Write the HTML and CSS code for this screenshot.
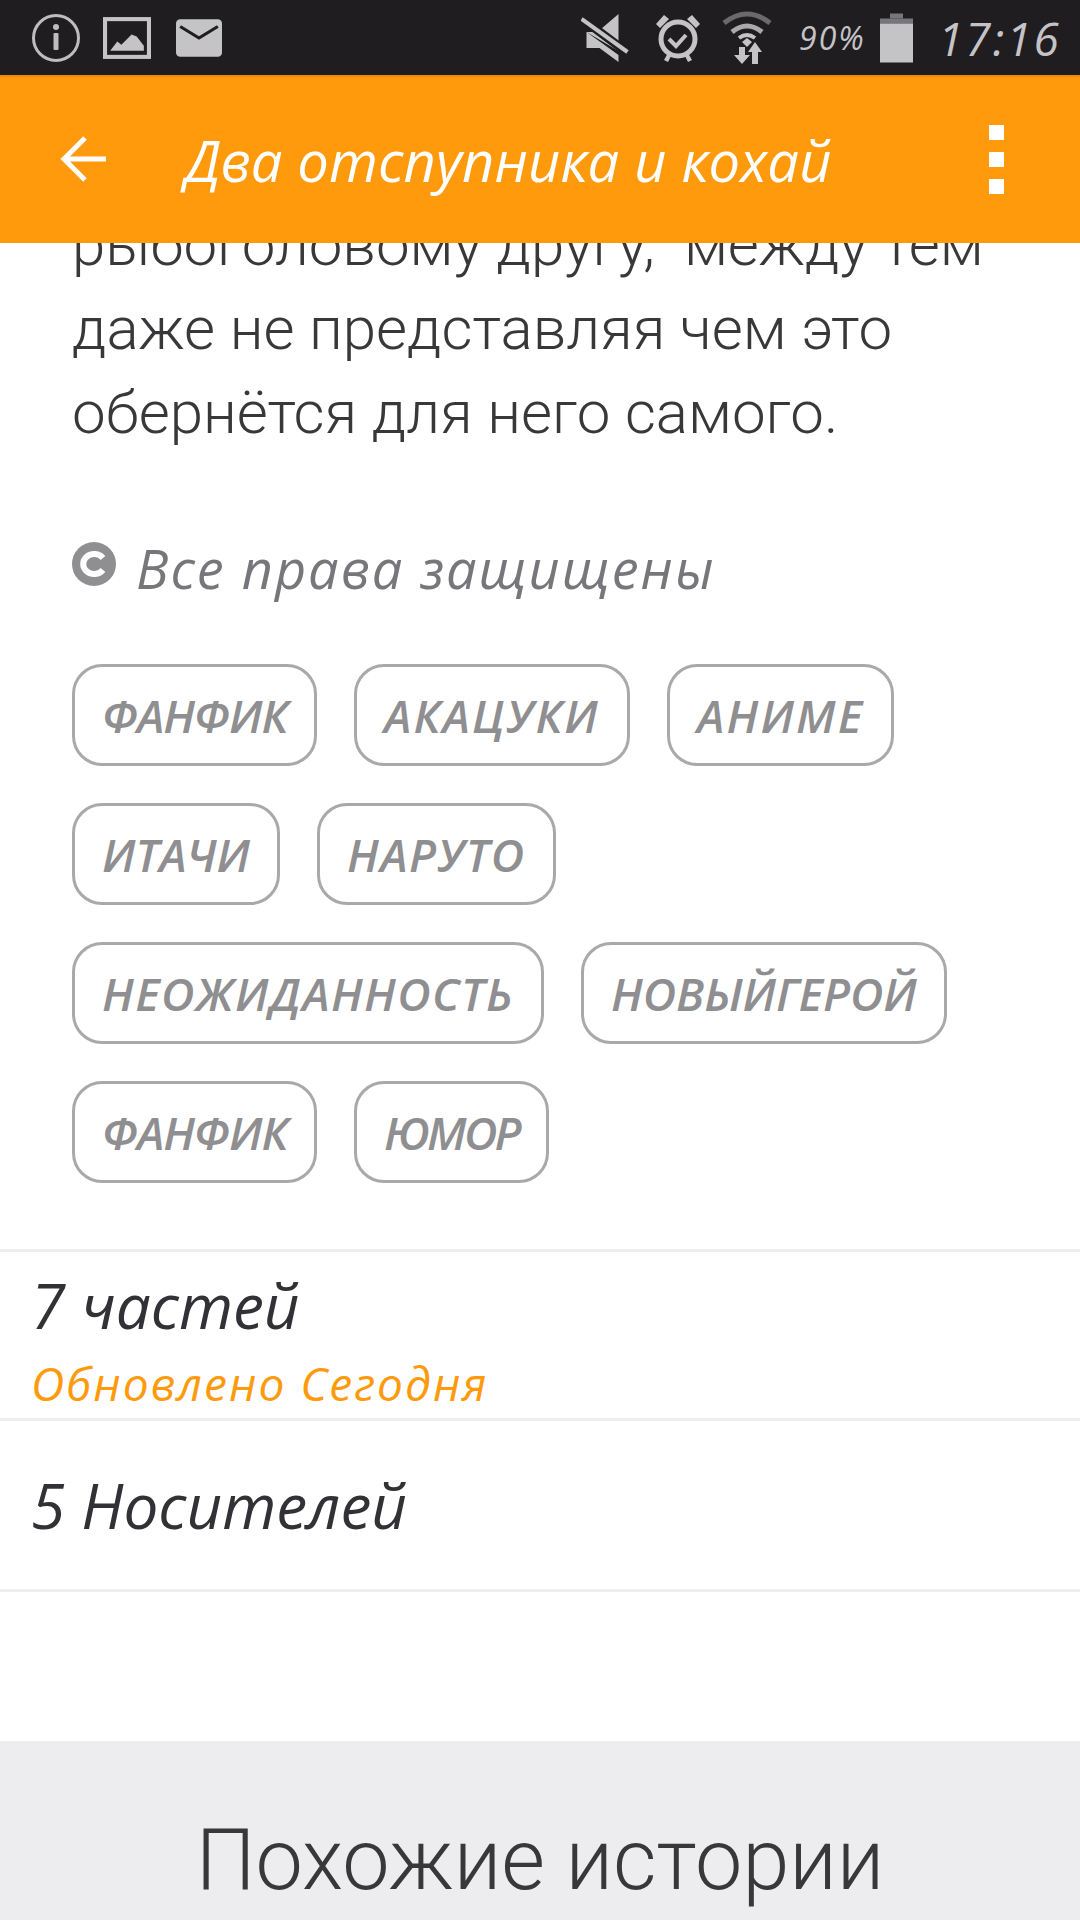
FILE: index.html
```html
<!DOCTYPE html>
<html lang="ru">
<head>
    <meta charset="UTF-8">
    <title>Два отспупника и кохай</title>
    <link rel="stylesheet" href="styles.css">
</head>
<body>

<div class="status-bar">
    <div class="status-group">
        <svg class="ic-info" viewBox="0 0 50 50">
            <circle cx="25" cy="25" r="22.5" fill="none" stroke="#bdbcbe" stroke-width="3"/>
            <circle cx="25" cy="14" r="3" fill="#bdbcbe"/>
            <rect x="22.5" y="20" width="5" height="17" rx="1" fill="#bdbcbe"/>
        </svg>
        <svg class="ic-image" viewBox="0 0 47 41">
            <rect x="2" y="2" width="43" height="37" fill="none" stroke="#c4c3c6" stroke-width="4"/>
            <path d="M7 33 L14 24 L18 27 L28 17 L33 19 L40 28 V33 Z" fill="#c4c3c6"/>
        </svg>
        <svg class="ic-mail" viewBox="0 0 44 36">
            <rect width="44" height="36" rx="4" fill="#c4c3c6"/>
            <path d="M4 7 L22 18 L40 7" fill="none" stroke="#1f1d20" stroke-width="3"/>
        </svg>
    </div>
    <div class="status-group right">
        <svg class="ic-mute" viewBox="0 0 48 50">
            <path d="M5 19 H16 L37 1 V38 Z M5 19 V35 H18 L37 49 V42 Z" fill="#c4c3c6"/>
            <path d="M1 6 L45 39" stroke="#1f1d20" stroke-width="9"/>
            <path d="M0 6 L46 39" stroke="#c4c3c6" stroke-width="4"/>
        </svg>
        <svg class="ic-alarm" viewBox="0 0 48 50">
            <circle cx="24" cy="26" r="17" fill="none" stroke="#c4c3c6" stroke-width="5"/>
            <path d="M15 26 L22 33 L32 22" fill="none" stroke="#c4c3c6" stroke-width="4"/>
            <path d="M2 11 L10 2 L15 6 L6 15 Z M46 11 L38 2 L33 6 L42 15 Z" fill="#c4c3c6"/>
            <path d="M10 47 L14 40 L17 43 L14 49 Z M38 47 L34 40 L31 43 L34 49 Z" fill="#c4c3c6"/>
        </svg>
        <svg class="ic-wifi" viewBox="0 0 50 53">
            <path d="M2 12 Q25 -6 48 12" fill="none" stroke="#6a696c" stroke-width="5"/>
            <path d="M10 21 Q25 9 40 21" fill="none" stroke="#a9a8ab" stroke-width="5"/>
            <path d="M17 27 Q25 21 33 27" fill="none" stroke="#c4c3c6" stroke-width="4"/>
            <path d="M20 31 L25 27 L30 31 L25 36 Z" fill="#c4c3c6"/>
            <path d="M17 36 H23 V44 H28 L20 53 L12 44 H17 Z M30 53 V41 H26 L33 31 L40 41 H36 V53 Z" fill="#c4c3c6"/>
        </svg>
        <span class="battery-pct">90%</span>
        <svg class="ic-battery" viewBox="0 0 33 49">
            <rect x="10" y="0" width="13" height="5" fill="#77767a"/>
            <rect x="0" y="5" width="33" height="5" fill="#77767a"/>
            <rect x="0" y="10" width="33" height="39" fill="#c4c3c6"/>
        </svg>
        <span class="clock">17:16</span>
    </div>
</div>

<div class="toolbar">
    <svg class="ic-back" viewBox="0 0 48 48">
        <path d="M46 24 H4 M25 3 L4 24 L25 45" fill="none" stroke="#fff" stroke-width="5"/>
    </svg>
    <h1 class="toolbar-title">Два отспупника и кохай</h1>
    <div class="overflow-menu"><i></i><i></i><i></i></div>
</div>

<div class="content">
    <div class="story">
        <p class="description">рыбоголовому другу,&nbsp; между тем<br>даже не представляя чем это<br>обернётся для него самого.</p>

        <div class="rights">
            <svg class="ic-copy" viewBox="0 0 44 44">
                <circle cx="22" cy="22" r="22" fill="#8f8e91"/>
                <path d="M31 16 A11 10 0 1 0 31 28" fill="none" stroke="#fff" stroke-width="6"/>
            </svg>
            <span>Все права защищены</span>
        </div>

        <div class="tags">
            <a class="tag tag-tight">ФАНФИК</a>
            <a class="tag tag-wider">АКАЦУКИ</a>
            <a class="tag tag-wider">АНИМЕ</a>
            <a class="tag">ИТАЧИ</a>
            <a class="tag tag-wide">НАРУТО</a>
            <a class="tag tag-wide">НЕОЖИДАННОСТЬ</a>
            <a class="tag">НОВЫЙГЕРОЙ</a>
            <a class="tag tag-tight">ФАНФИК</a>
            <a class="tag tag-tighter">ЮМОР</a>
        </div>
    </div>

    <div class="row row-parts">
        <div class="row-title">7 частей</div>
        <div class="row-sub">Обновлено Сегодня</div>
    </div>
    <div class="row row-readers">
        <div class="row-title">5 Носителей</div>
    </div>

    <div class="similar">
        <h2>Похожие истории</h2>
    </div>
</div>

</body>
</html>
```

FILE: styles.css
```css
html, body {
    margin: 0;
    padding: 0;
    height: 1920px;
    overflow: hidden;
    background-color: #fff;
}

body {
    font-family: "Open Sans", "Noto Sans", sans-serif;
    display: flex;
    flex-direction: column;
}

/* Status bar */
.status-bar {
    height: 75px;
    background-color: #1f1d20;
    display: flex;
    justify-content: space-between;
    align-items: center;
    padding: 0 20px 0 31px;
    flex-shrink: 0;
    box-sizing: border-box;
}

.status-group {
    display: flex;
    align-items: center;
}

.ic-info { width: 50px; height: 50px; margin-right: 22px; }
.ic-image { width: 48px; height: 42px; margin-right: 25px; }
.ic-mail { width: 46px; height: 38px; }
.ic-mute { width: 49px; height: 50px; margin-right: 24px; }
.ic-alarm { width: 48px; height: 50px; margin-right: 20px; }
.ic-wifi { width: 50px; height: 53px; margin-right: 27px; }
.ic-battery { width: 33px; height: 50px; margin-right: 25px; }

.battery-pct {
    font-size: 32px;
    font-style: italic;
    letter-spacing: 2px;
    color: #c4c3c6;
    margin-right: 11px;
    width: 70px;
    white-space: nowrap;
}

.clock {
    font-size: 46px;
    font-style: italic;
    color: #c4c3c6;
    letter-spacing: 2px;
    width: 122px;
    white-space: nowrap;
}

/* Orange toolbar */
.toolbar {
    height: 168px;
    background-color: #ff9a0d;
    border-top: 2px solid #ee8a08;
    box-sizing: border-box;
    display: flex;
    align-items: center;
    padding: 0 0 0 60px;
    flex-shrink: 0;
    position: relative;
    z-index: 1;
}

.ic-back {
    width: 48px;
    height: 48px;
    flex-shrink: 0;
    margin-top: -3px;
}

.toolbar-title {
    margin: 0 0 0 77px;
    font-size: 56px;
    letter-spacing: 0.2px;
    font-weight: 400;
    font-style: italic;
    color: #fff;
    flex: 1;
    white-space: nowrap;
}

.overflow-menu {
    display: flex;
    flex-direction: column;
    gap: 12px;
    margin-right: 76px;
    margin-top: -2px;
}

.overflow-menu i {
    display: block;
    width: 15px;
    height: 15px;
    background-color: #fff;
}

/* Scrolled story content */
.content {
    flex: 1;
    overflow: hidden;
}

.story {
    padding: 0 72px;
}

.description {
    margin: -40px 0 0;
    font-family: Roboto, sans-serif;
    font-weight: 300;
    font-size: 60px;
    line-height: 84px;
    color: #38373a;
}

.rights {
    display: flex;
    align-items: center;
    margin-top: 80px;
    color: #77767a;
    font-size: 54px;
    line-height: 67px;
    letter-spacing: 2px;
    font-style: italic;
}

.ic-copy {
    width: 44px;
    height: 44px;
    margin-right: 20px;
    margin-top: -10px;
}

.tags {
    display: flex;
    flex-wrap: wrap;
    gap: 37px;
    margin-top: 62px;
}

.tag {
    height: 102px;
    box-sizing: border-box;
    border: 3px solid #a9a8ab;
    border-radius: 30px;
    padding: 0 27px;
    display: flex;
    align-items: center;
    font-size: 46px;
    font-weight: 600;
    font-style: italic;
    color: #8f8e91;
}

.tag-tight { letter-spacing: -1px; }
.tag-tighter { letter-spacing: -2.7px; }
.tag-wide { letter-spacing: 1.4px; }
.tag-wider { letter-spacing: 2.2px; }

/* Parts and readers rows */
.row {
    border-bottom: 3px solid #eeeef0;
    padding: 0 31px;
    box-sizing: border-box;
}

.row-parts {
    border-top: 3px solid #eeeef0;
    margin-top: 66px;
    height: 172px;
}

.row-readers {
    height: 171px;
    display: flex;
    align-items: center;
}

.row-title {
    font-size: 62px;
    font-style: italic;
    color: #323135;
}

.row-parts .row-title {
    padding-top: 18px;
    line-height: 70px;
}

.row-sub {
    font-size: 46px;
    font-style: italic;
    letter-spacing: 2px;
    line-height: 62px;
    margin-top: 12px;
    color: #ff9a0d;
}

/* Similar stories */
.similar {
    margin-top: 149px;
    background-color: #ededf0;
    height: 180px;
    text-align: center;
}

.similar h2 {
    margin: 0;
    padding-top: 70px;
    font-family: Roboto, sans-serif;
    font-weight: 300;
    font-size: 84.5px;
    line-height: 100px;
    color: #38373a;
}
```
